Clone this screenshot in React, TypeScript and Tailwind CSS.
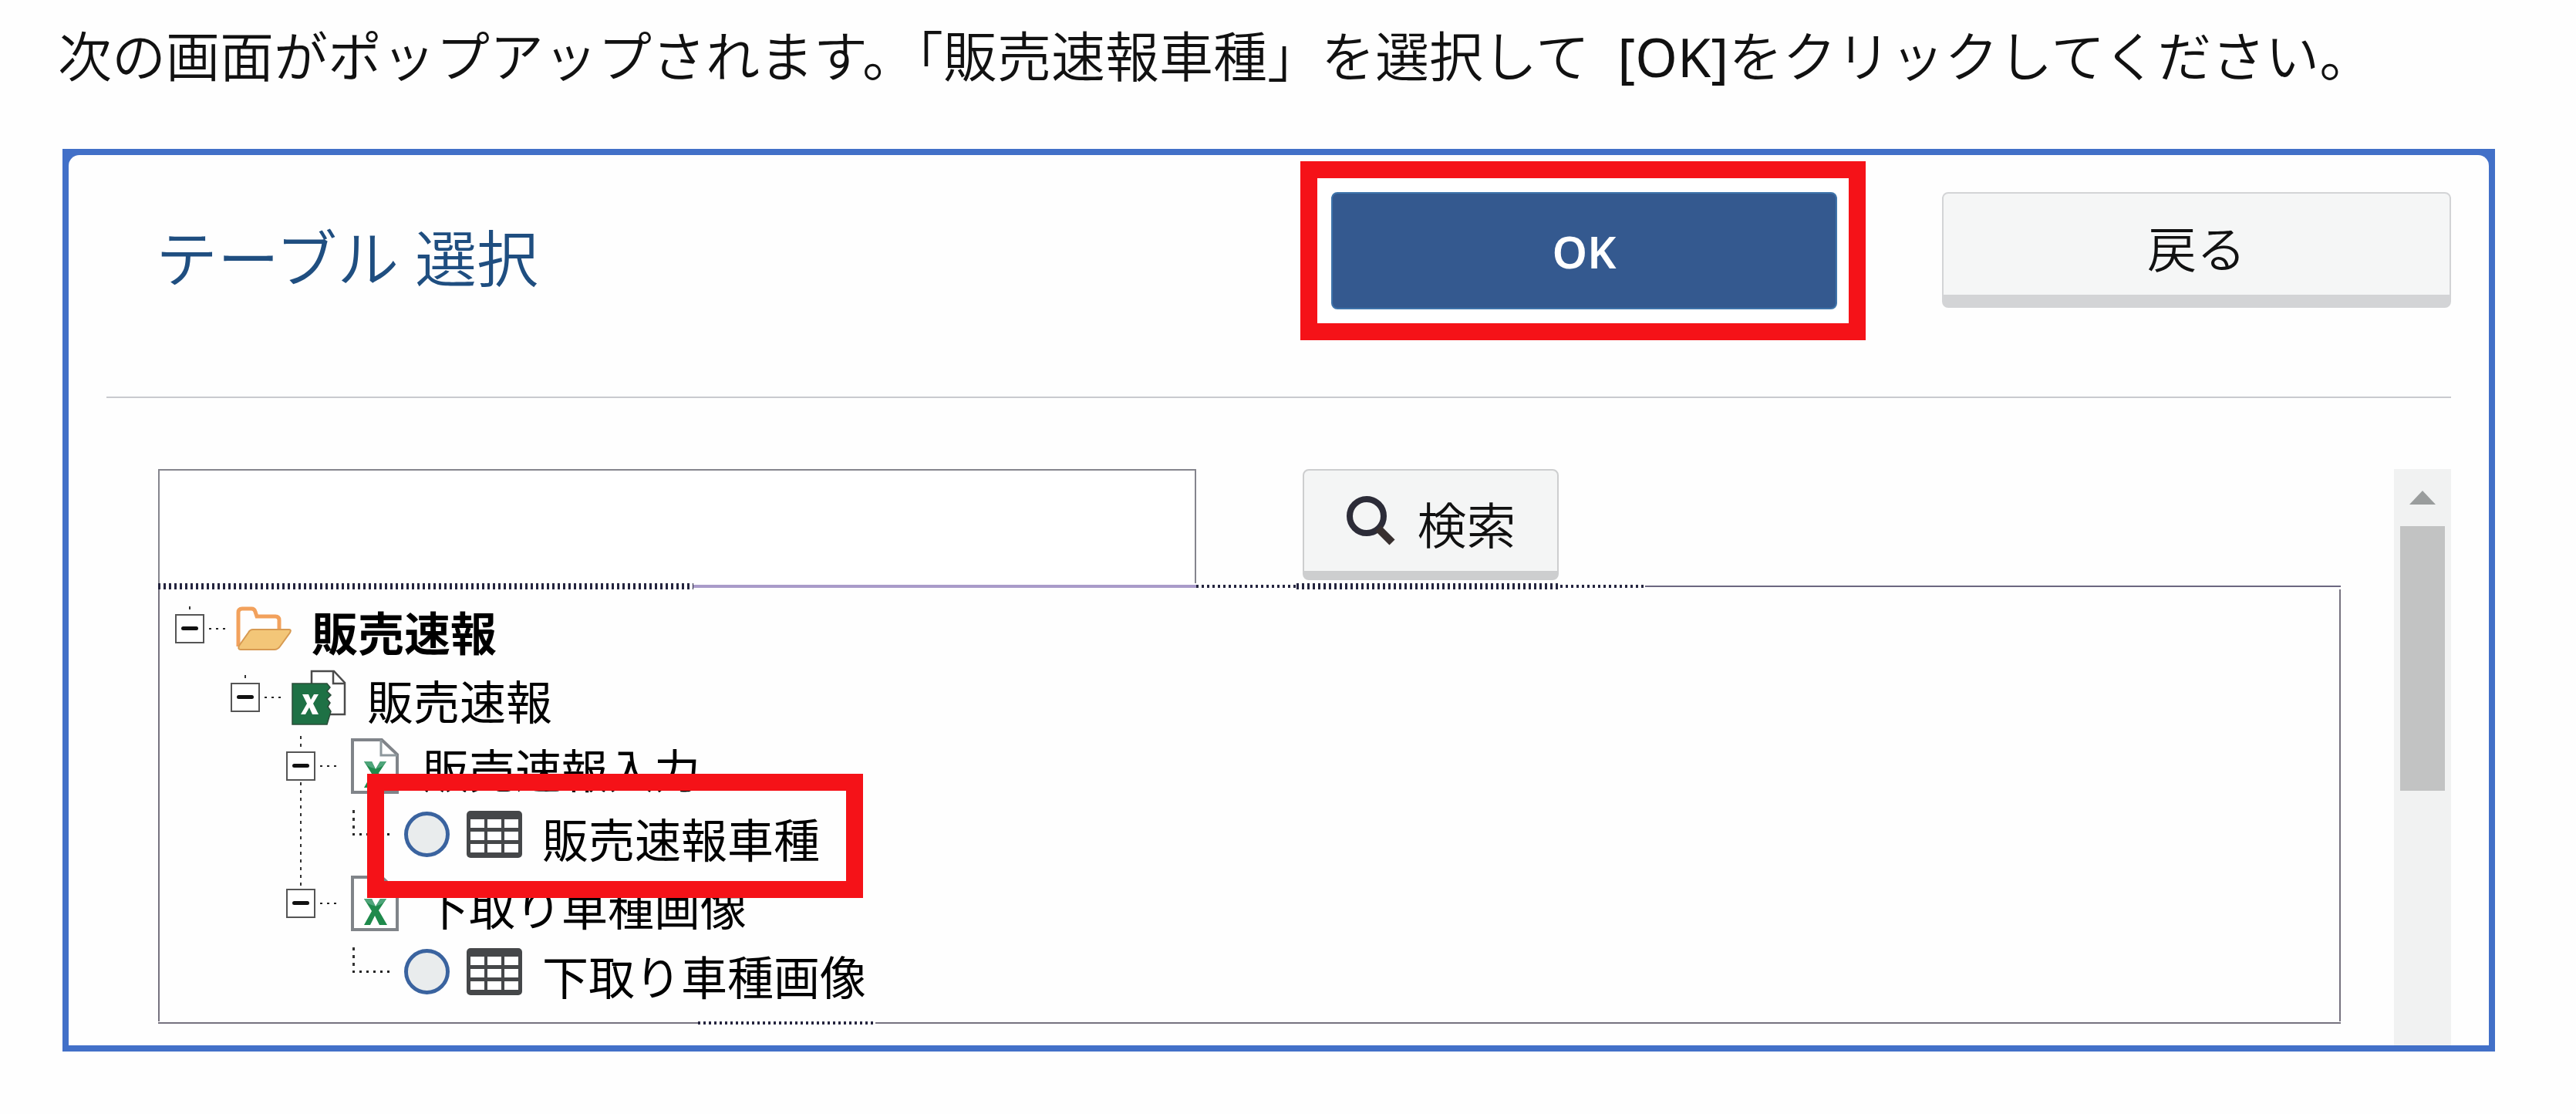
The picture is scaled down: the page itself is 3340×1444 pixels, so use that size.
import React from "react";

const FONT = "font-['Noto_Sans','Noto_Sans_CJK_JP',sans-serif]";
const DOTS_X = "bg-[repeating-linear-gradient(90deg,#222_0_3px,transparent_3px_9px)]";
const DOTS_Y = "bg-[repeating-linear-gradient(180deg,#333_0_4px,transparent_4px_10px)]";
const TEETH = "bg-[repeating-linear-gradient(90deg,#25253f_0_3px,transparent_3px_7px)]";

function FolderIcon() {
  return (
    <svg className="h-[58px] w-[72px] shrink-0" viewBox="0 0 72 58" aria-hidden="true">
      <path
        d="M3 52V8q0-5 5-5h12q4 0 5 4l2 6h24q5 0 5 5v12"
        fill="none"
        stroke="#f2a15c"
        strokeWidth="5"
      />
      <path d="M22 30h47q3 0 1 4L57 52q-3 4-7 4H6q-4 0-2-5L16 34q2-4 6-4z" fill="#f3c678" stroke="#d79a52" strokeWidth="2" />
    </svg>
  );
}

function WorkbookIcon() {
  return (
    <svg className="h-[72px] w-[72px] shrink-0" viewBox="0 0 72 72" aria-hidden="true">
      <path d="M26 18V2h29l14 15v41H46" fill="#fff" stroke="#4b4b4b" strokeWidth="2.5" />
      <path d="M54 2v16h15" fill="none" stroke="#4b4b4b" strokeWidth="2.5" />
      <path d="M1 18h45l4 5-4 5 5 5-5 5 4 5-3 5 4 6-5 17H1z" fill="#1e7145" stroke="#2b4c39" strokeWidth="1.5" />
      <path d="M14 32h8l3 7 4-7h6l-7 12 7 14h-8l-4-9-5 9h-6l8-14z" fill="#fff" />
    </svg>
  );
}

function SheetIcon() {
  return (
    <svg className="h-[72px] w-[72px] shrink-0" viewBox="0 0 72 72" aria-hidden="true">
      <path d="M7 2h38l20 19v49H7z" fill="#fff" stroke="#808489" strokeWidth="4" />
      <path d="M44 2v20h21" fill="none" stroke="#8d979c" strokeWidth="3" />
      <path d="M22 30h10l5 10 6-10h8L41 45l11 19H42l-6-12-6 12h-8l10-18z" fill="#1f8a4c" />
      <path d="M22 30h10l5 10 6-10h8l-4 5q-10 8-21 0z" fill="#4fa57b" />
    </svg>
  );
}

function TableIcon() {
  const rows = [11, 27, 43];
  const columns = [5, 27, 49];
  return (
    <svg className="h-[61px] w-[72px] shrink-0" viewBox="0 0 72 61" aria-hidden="true">
      <rect width="72" height="61" rx="5" fill="#454749" />
      {rows.map((y) => columns.map((x) => <rect key={`${x}-${y}`} x={x} y={y} width="18" height="11" fill="#fff" />))}
    </svg>
  );
}

function Toggle({ label }: { label: string }) {
  return (
    <>
      <button
        type="button"
        aria-label={`${label}を折りたたむ`}
        className="flex size-[38px] shrink-0 items-center justify-center border-2 border-[#555] bg-white"
      >
        <span className="h-[5px] w-[22px] rounded-sm bg-[#111]" />
      </button>
      <span className={`mr-[11px] ml-[6px] h-[2px] w-[24px] shrink-0 ${DOTS_X}`} />
    </>
  );
}

type BranchProps = {
  label: string;
  indent: string;
  icon: React.ReactNode;
  bold?: boolean;
  line: string;
  children?: React.ReactNode;
};

function Branch({ label, indent, icon, bold, line, children }: BranchProps) {
  return (
    <li>
      <div className={`relative flex h-[89px] items-center ${indent}`}>
        <span className="relative flex items-center">
          <span className={`absolute left-[18px] w-[2px] ${line}`} />
          <Toggle label={label} />
        </span>
        {icon}
        <span className={`ml-[26px] pt-[12px] whitespace-nowrap ${bold ? "font-bold" : ""}`}>{label}</span>
      </div>
      {children && <ul>{children}</ul>}
    </li>
  );
}

function Leaf({ label, highlighted }: { label: string; highlighted?: boolean }) {
  return (
    <li className="flex h-[89px] pl-[250px]">
      <label className="relative flex items-center">
        <span className="mr-[15px] h-[32px] w-[52px] shrink-0 -translate-y-4">
          <span className={`block h-[30px] w-[3px] ${DOTS_Y}`} />
          <span className={`block h-[3px] ${DOTS_X}`} />
        </span>
        <input
          type="radio"
          name="table"
          className="mr-[22px] size-[59px] shrink-0 appearance-none rounded-full border-[5px] border-[#3a639f] bg-[#e9eced]"
        />
        <TableIcon />
        <span className="ml-[26px] pt-[14px] whitespace-nowrap">{label}</span>
        {highlighted && (
          <span className="pointer-events-none absolute -top-[34px] left-[19px] z-10 h-[161px] w-[643px] border-[22px] border-[#f51218]" />
        )}
      </label>
    </li>
  );
}

export default function App() {
  return (
    <main className={`min-h-screen bg-[#fefefe] pb-[60px] ${FONT}`} lang="ja">
      <p className="pt-[23px] pl-[75px] text-[70px] leading-[100px] font-[350] whitespace-pre text-[#111]">
        次の画面がポップアップされます。「販売速報車種」を選択して{"  "}
        <span className="font-normal">[OK]</span>をクリックしてください。
      </p>

      <section className="mt-[70px] mr-[105px] ml-[81px] border-8 border-[#4270c8] bg-[#4270c8]">
        <div className="rounded-t-[14px] bg-[#fefefe] pr-[49px] pl-[49px]">
          <header className="flex items-start border-b-2 border-[#c9cacf] pt-[8px] pb-[73px]">
            <h1 className="flex-1 pt-[75px] pl-[64px] text-[80px] leading-[100px] font-[350] text-[#1f4e80]">
              テーブル 選択
            </h1>
            <div className="mr-[99px] w-[733px] border-[22px] border-[#f51218] bg-white p-[18px] pr-[15px]">
              <button
                type="button"
                className="h-[152px] w-full rounded-lg border-2 border-[#3f74ab] bg-[#34598f] text-[58px] font-semibold text-white"
              >
                OK
              </button>
            </div>
            <button
              type="button"
              className="mt-[40px] h-[150px] w-[660px] rounded-lg border-2 border-b-[17px] border-[#d3d4d6] bg-[#f5f6f6] pt-[12px] text-[64px] leading-[80px] font-[350] text-[#111]"
            >
              戻る
            </button>
          </header>

          <div className="flex pt-[92px]">
            <div className="min-w-0 flex-1 pb-[27px] pl-[67px]">
              <form className="flex h-[148px] items-start" onSubmit={(e) => e.preventDefault()}>
                <input
                  type="text"
                  aria-label="テーブル検索"
                  className="mr-[138px] h-[148px] w-[1346px] border-2 border-b-0 border-[#85858d] bg-white px-[24px] text-[60px] outline-none"
                />
                <button
                  type="submit"
                  className="flex h-[144px] w-[332px] items-center justify-center gap-[27px] rounded-lg border-2 border-b-[12px] border-[#cdcecf] bg-[#f4f5f5] text-[64px] leading-[80px] font-[350] text-[#111]"
                >
                  <svg className="size-[66px]" viewBox="0 0 66 66" aria-hidden="true">
                    <circle cx="27" cy="27" r="22" fill="none" stroke="#2c2c38" strokeWidth="8" />
                    <path d="M42 43l18 18" stroke="#38302f" strokeWidth="10" />
                  </svg>
                  <span className="pt-[12px]">検索</span>
                </button>
              </form>

              <div className="flex h-[8px] items-center">
                <span className={`h-[8px] w-[694px] ${TEETH}`} />
                <span className="h-[4px] w-[652px] bg-[#a99bc9]" />
                <span className={`h-[4px] w-[130px] ${TEETH}`} />
                <span className={`h-[8px] w-[342px] ${TEETH}`} />
                <span className={`h-[4px] w-[110px] ${TEETH}`} />
                <span className="h-[2px] flex-1 bg-[#6b6780]" />
              </div>

              <ul className="border-x-2 border-[#76727f] pt-[6px] pb-[20px] text-[60px] leading-[80px] text-black">
                <Branch label="販売速報" indent="pl-[20px]" icon={<FolderIcon />} bold line="-top-[10px] h-[4px] bg-[#333]">
                  <Branch label="販売速報" indent="pl-[92px]" icon={<WorkbookIcon />} line="-top-[10px] h-[4px] bg-[#333]">
                    <Branch label="販売速報入力" indent="pl-[164px]" icon={<SheetIcon />} line={`-top-[20px] h-[14px] ${DOTS_Y}`}>
                      <Leaf label="販売速報車種" highlighted />
                    </Branch>
                    <Branch label="下取り車種画像" indent="pl-[164px]" icon={<SheetIcon />} line={`-top-[138px] h-[134px] ${DOTS_Y}`}>
                      <Leaf label="下取り車種画像" />
                    </Branch>
                  </Branch>
                </Branch>
              </ul>
              <div className="flex h-[4px] items-center">
                <span className="h-[2px] w-[700px] bg-[#76727f]" />
                <span className={`h-[4px] w-[230px] ${TEETH}`} />
                <span className="h-[2px] flex-1 bg-[#76727f]" />
              </div>
            </div>

            <div className="ml-[69px] flex w-[74px] shrink-0 flex-col items-center bg-[#f1f2f2]">
              <button type="button" aria-label="上へスクロール" className="flex h-[74px] w-full items-center justify-center">
                <svg className="h-[18px] w-[34px]" viewBox="0 0 34 18" aria-hidden="true">
                  <path d="M17 0l17 18H0z" fill="#9a9d9d" />
                </svg>
              </button>
              <div className="h-[343px] w-[58px] bg-[#c2c3c3]" />
            </div>
          </div>
        </div>
      </section>
    </main>
  );
}
